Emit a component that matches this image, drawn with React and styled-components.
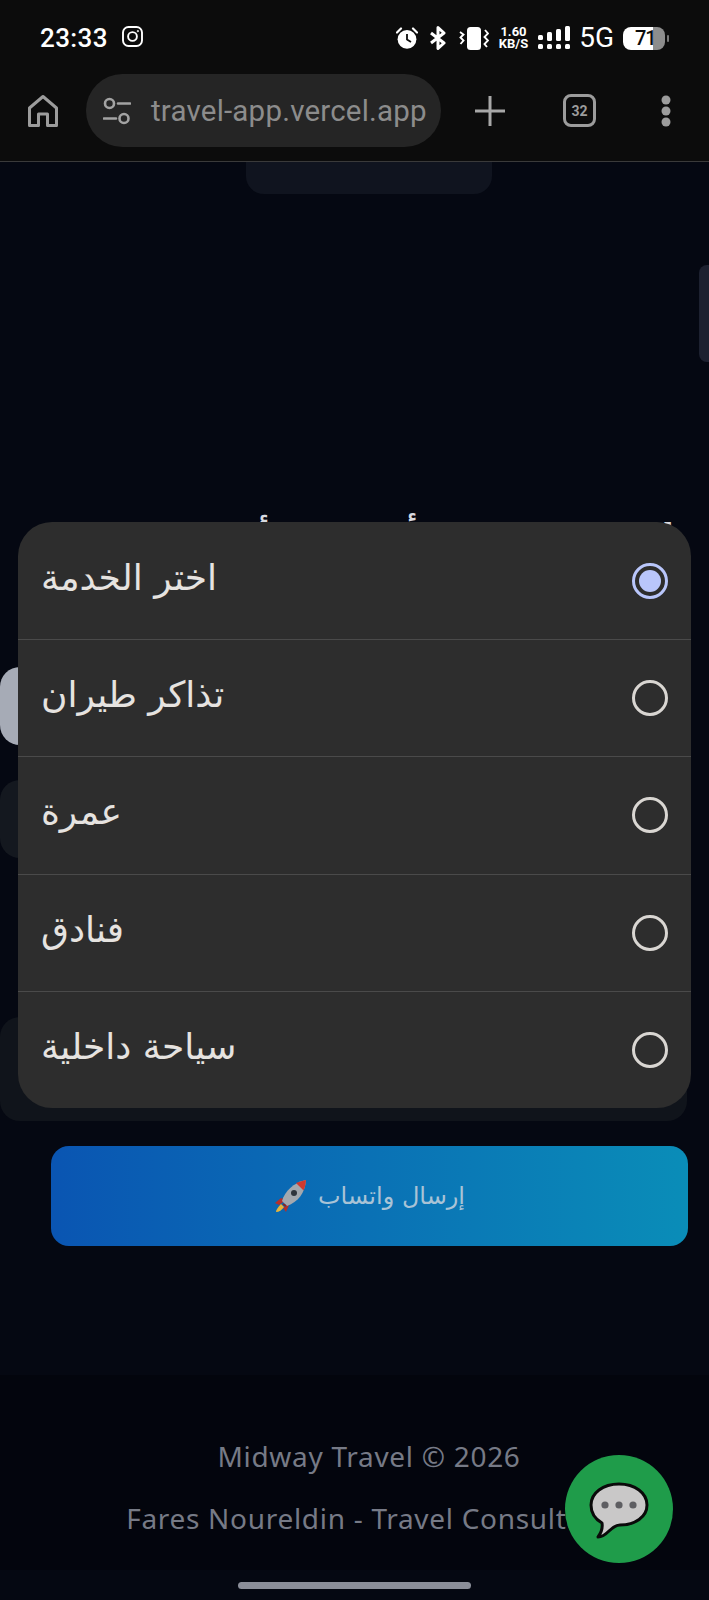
import styled, { createGlobalStyle } from "styled-components";

const options = ["اختر الخدمة", "تذاكر طيران", "عمرة", "فنادق", "سياحة داخلية"];

const GlobalStyle = createGlobalStyle`
  html, body {
    margin: 0;
    padding: 0;
    background: #050812;
  }
  * {
    box-sizing: border-box;
  }
`;

const HomeIcon = () => (
  <svg width="32" height="34" viewBox="0 0 32 34" fill="none" stroke="#9c9c9c" strokeWidth="3">
    <path d="M2.5 31.5V14L16 2.5L29.5 14V31.5H20.5V20H11.5V31.5Z" strokeLinejoin="round" />
  </svg>
);

const TuneIcon = () => (
  <svg width="28" height="28" viewBox="0 0 28 28" fill="none" stroke="#a3a3a3" strokeWidth="2.6">
    <circle cx="6.5" cy="6.5" r="4.5" />
    <path d="M15 6.5H27M1 21.5H13" strokeLinecap="round" />
    <circle cx="21" cy="21.5" r="4.5" />
  </svg>
);

const PlusIcon = () => (
  <svg width="30" height="30" viewBox="0 0 30 30" stroke="#a8a8a8" strokeWidth="3">
    <path d="M15 0V30M0 15H30" />
  </svg>
);

const MoreIcon = () => (
  <svg width="10" height="32" viewBox="0 0 10 32" fill="#9c9c9c">
    <circle cx="5" cy="5" r="4.5" />
    <circle cx="5" cy="16" r="4.5" />
    <circle cx="5" cy="27" r="4.5" />
  </svg>
);

const InstagramIcon = () => (
  <svg width="21" height="21" viewBox="0 0 21 21" fill="none" stroke="#fff" strokeWidth="1.9">
    <rect x="1" y="1" width="19" height="19" rx="5.5" />
    <circle cx="10.5" cy="10.5" r="4.4" />
    <circle cx="15.9" cy="5.1" r="0.7" fill="#fff" strokeWidth="0.8" />
  </svg>
);

const AlarmIcon = () => (
  <svg width="22" height="22" viewBox="0 0 22 22">
    <circle cx="11" cy="12.3" r="9.4" fill="#fff" />
    <path d="M11 7V12.6L15 15" fill="none" stroke="#0c0c0c" strokeWidth="1.8" />
    <path d="M1 5.5L5 1.5M21 5.5L17 1.5" stroke="#fff" strokeWidth="2.2" strokeLinecap="round" />
  </svg>
);

const BluetoothIcon = () => (
  <svg width="18" height="24" viewBox="0 0 18 24" fill="none" stroke="#fff" strokeWidth="3">
    <path d="M2 7L15 17L9 22.5V1.5L15 7L2 17" strokeLinejoin="round" />
  </svg>
);

const VibrateIcon = () => (
  <svg width="30" height="23" viewBox="0 0 30 23" fill="none" stroke="#fff" strokeWidth="1.9">
    <rect x="8" y="0" width="14" height="23" rx="3.5" fill="#fff" stroke="none" />
    <path d="M1 5L4.5 7.5L1.5 10.5L4.5 13.5L1.5 17" />
    <path d="M26 3L29 6.5L25.5 10L29 13.5L25.5 17L28 20" />
  </svg>
);

const SignalIcon = () => (
  <svg width="32" height="24" viewBox="0 0 32 24" fill="#fff">
    <rect x="0" y="9" width="5" height="5" rx="1.5" />
    <rect x="0" y="18" width="5" height="5" rx="1.5" />
    <rect x="9" y="6" width="5" height="9" rx="1.5" />
    <rect x="9" y="18" width="5" height="5" rx="1.5" />
    <rect x="18" y="3" width="5" height="12" rx="1.5" />
    <rect x="18" y="18" width="5" height="5" rx="1.5" />
    <rect x="27" y="0" width="5" height="15" rx="1.5" />
    <rect x="27" y="18" width="5" height="5" rx="1.5" />
  </svg>
);

const RocketIcon = () => (
  <svg width="34" height="36" viewBox="0 0 34 36">
    <path d="M7 20L1 25L5 27L12 22Z" fill="#b52f2b" />
    <path d="M15 27L12 34L9 30L19 23Z" fill="#b52f2b" />
    <path d="M7 26C4 29 2 32 2 34C5 34 8 32 10 29Z" fill="#e8b53a" />
    <path d="M8 23C11 13 19 5 32 2C31 15 24 24 13 28Z" fill="#a4a8ae" />
    <path d="M22 5C26 3.5 29 2.6 32 2C31.8 5.5 31 9 29.6 12.5Z" fill="#cf3a30" />
    <circle cx="20" cy="15" r="3" fill="#30353c" />
    <path d="M9 26L12 28" stroke="#8c2622" strokeWidth="2" />
  </svg>
);

const BubbleIcon = () => (
  <svg width="60" height="58" viewBox="0 0 60 58">
    <path
      d="M30 2C46 2 58 11 58 23C58 35 46 43 31 43C27 43 24 45 20 49C17 52 13 55 9 55C12 51 14 47 13 41C6 37 2 30 2 23C2 11 14 2 30 2Z"
      fill="#c9c8c8"
      stroke="#0a0a0a"
      strokeWidth="3"
      strokeLinejoin="round"
    />
    <circle cx="16" cy="23" r="3.6" fill="#5e5e62" />
    <circle cx="30" cy="23" r="3.6" fill="#5e5e62" />
    <circle cx="44" cy="23" r="3.6" fill="#5e5e62" />
  </svg>
);

const App = () => {
  return (
    <>
      <GlobalStyle />
      <StyledScreen>
        <StyledBrowserChrome>
          <StyledStatusBar>
            <StyledTime>23:33</StyledTime>
            <InstagramIcon />
            <StyledStatusIcons>
              <AlarmIcon />
              <BluetoothIcon />
              <VibrateIcon />
              <StyledSpeed>
                <span>1.60</span>
                <span>KB/S</span>
              </StyledSpeed>
              <SignalIcon />
              <StyledNetwork>5G</StyledNetwork>
              <StyledBattery>
                <StyledBatteryLevel>71</StyledBatteryLevel>
              </StyledBattery>
            </StyledStatusIcons>
          </StyledStatusBar>
          <StyledToolbar>
            <HomeIcon />
            <StyledAddressBar>
              <TuneIcon />
              <StyledUrl>travel-app.vercel.app</StyledUrl>
            </StyledAddressBar>
            <StyledPlusSlot>
              <PlusIcon />
            </StyledPlusSlot>
            <StyledTabCount>32</StyledTabCount>
            <MoreIcon />
          </StyledToolbar>
        </StyledBrowserChrome>

        <StyledPage>
          <StyledNavTab />
          <StyledHeading>اطلب رحلتك بأفضل الأسعار</StyledHeading>
          <StyledForm>
            <StyledField $tone="#a6abb6" />
            <StyledField $tone="#14181f" />
            <StyledTextArea />
            <StyledSendButton>
              <RocketIcon />
              <span>إرسال واتساب</span>
            </StyledSendButton>
          </StyledForm>
          <StyledFooter>
            <StyledFooterText>Midway Travel © 2026</StyledFooterText>
            <StyledFooterText>Fares Noureldin - Travel Consultant</StyledFooterText>
          </StyledFooter>
          <StyledGestureArea>
            <StyledGestureBar />
          </StyledGestureArea>
        </StyledPage>

        <StyledScrollThumb />

        <StyledSheet>
          {options.map((option, index) => (
            <StyledOption key={option}>
              <StyledOptionLabel>{option}</StyledOptionLabel>
              <StyledRadio $checked={index === 0} />
            </StyledOption>
          ))}
        </StyledSheet>

        <StyledChatButton>
          <BubbleIcon />
        </StyledChatButton>
      </StyledScreen>
    </>
  );
};

const StyledScreen = styled.div`
  position: relative;
  width: 709px;
  height: 1600px;
  overflow: hidden;
  display: flex;
  flex-direction: column;
  background: #050812;
  font-family: Roboto, "Noto Sans", sans-serif;
`;

const StyledBrowserChrome = styled.header`
  height: 162px;
  flex-shrink: 0;
  background: #0c0c0c;
  border-bottom: 1px solid #3a3a3a;
`;

const StyledStatusBar = styled.div`
  height: 74px;
  padding: 26px 44px 0 40px;
  display: flex;
  align-items: flex-start;
  gap: 14px;
  color: #fff;
`;

const StyledTime = styled.span`
  font-size: 26px;
  line-height: 24px;
  font-weight: 500;
  letter-spacing: 0.4px;
`;

const StyledStatusIcons = styled.div`
  margin-left: auto;
  display: flex;
  align-items: center;
  gap: 10px;
  > svg:first-child {
    margin-right: 1px;
  }
  > svg:nth-child(3) {
    margin-left: 2px;
  }
`;

const StyledSpeed = styled.div`
  display: flex;
  flex-direction: column;
  align-items: center;
  font-size: 13px;
  line-height: 12px;
  font-weight: 700;
`;

const StyledNetwork = styled.span`
  font-size: 28px;
  line-height: 24px;
  margin-left: -1px;
  margin-right: -1px;
`;

const StyledBattery = styled.div`
  position: relative;
  width: 42px;
  height: 23px;
  border-radius: 8px;
  background: linear-gradient(90deg, #fff 0 72%, #8d8d8d 72% 100%);
  &::after {
    content: "";
    position: absolute;
    right: -4px;
    top: 8px;
    width: 2px;
    height: 7px;
    border-radius: 1px;
    background: #777;
  }
`;

const StyledBatteryLevel = styled.span`
  display: block;
  padding-left: 12px;
  color: #0c0c0c;
  font-size: 20px;
  line-height: 23px;
  font-weight: 500;
  letter-spacing: -1px;
`;

const StyledToolbar = styled.div`
  height: 73px;
  padding: 0 0 0 27px;
  display: flex;
  align-items: center;
`;

const StyledAddressBar = styled.div`
  width: 355px;
  height: 73px;
  margin-left: 27px;
  padding-left: 17px;
  display: flex;
  align-items: center;
  gap: 20px;
  border-radius: 37px;
  background: #252525;
`;

const StyledUrl = styled.span`
  color: #8c8c8c;
  font-size: 29.5px;
  letter-spacing: 0.2px;
  white-space: nowrap;
`;

const StyledPlusSlot = styled.div`
  display: flex;
  margin-left: 34px;
`;

const StyledTabCount = styled.div`
  width: 33px;
  height: 33px;
  margin-left: 58px;
  margin-right: 65px;
  display: flex;
  align-items: center;
  justify-content: center;
  border: 3px solid #9c9c9c;
  border-radius: 8px;
  color: #9c9c9c;
  font-size: 14px;
  font-weight: 700;
`;

const StyledPage = styled.main`
  flex: 1;
  display: flex;
  flex-direction: column;
  min-height: 0;
`;

const StyledNavTab = styled.div`
  width: 246px;
  height: 32px;
  margin-left: 246px;
  flex-shrink: 0;
  border-radius: 0 0 18px 18px;
  background: #10141f;
`;

const StyledHeading = styled.h1`
  width: 709px;
  height: 50px;
  margin: 319px 0 0;
  padding: 0 35px;
  color: #d8dae0;
  font-family: "DejaVu Sans", sans-serif;
  font-size: 37px;
  line-height: 50px;
  font-weight: 700;
  white-space: nowrap;
  direction: rtl;
`;

const StyledForm = styled.div`
  margin-top: 104px;
  display: flex;
  flex-direction: column;
`;

const StyledField = styled.div`
  width: 687px;
  height: 78px;
  margin-bottom: 35px;
  border-radius: 20px;
  background: ${(props) => props.$tone};
`;

const StyledTextArea = styled.div`
  width: 687px;
  height: 104px;
  margin-top: 124px;
  border-radius: 20px;
  background: #10141b;
`;

const StyledSendButton = styled.div`
  width: 637px;
  height: 100px;
  margin: 25px 0 0 51px;
  display: flex;
  align-items: center;
  justify-content: center;
  gap: 10px;
  border-radius: 18px;
  background: linear-gradient(90deg, #0a55b2, #0a8db8);
  color: #a9c3d6;
  font-family: "DejaVu Sans", sans-serif;
  font-size: 24px;
`;

const StyledFooter = styled.footer`
  width: 738px;
  height: 195px;
  margin-top: 129px;
  padding-top: 62px;
  flex-shrink: 0;
  display: flex;
  flex-direction: column;
  align-items: center;
  gap: 24px;
  background: #03050d;
`;

const StyledFooterText = styled.p`
  margin: 0;
  color: #767a86;
  font-family: "Noto Sans", sans-serif;
  font-size: 28px;
  line-height: 38px;
  letter-spacing: 0.7px;
  white-space: nowrap;
`;

const StyledGestureArea = styled.div`
  flex: 1;
  padding: 12px 0 0 238px;
`;

const StyledGestureBar = styled.div`
  width: 233px;
  height: 7px;
  border-radius: 4px;
  background: #8b8e99;
`;

const StyledScrollThumb = styled.div`
  position: absolute;
  top: 265px;
  right: -10px;
  width: 20px;
  height: 97px;
  border-radius: 8px;
  background: #1d2130;
`;

const StyledSheet = styled.div`
  position: absolute;
  top: 522px;
  left: 18px;
  width: 673px;
  border-radius: 34px;
  background: #2d2d2d;
`;

const StyledOption = styled.div`
  height: 117.2px;
  padding: 0 23px 0 23px;
  display: flex;
  align-items: center;
  justify-content: space-between;
  &:not(:first-child) {
    border-top: 1px solid #4a4a4a;
  }
`;

const StyledOptionLabel = styled.span`
  color: #e6e3e0;
  font-family: "DejaVu Sans", sans-serif;
  font-size: 36px;
  line-height: 44px;
  margin-top: -6px;
`;

const StyledRadio = styled.span`
  position: relative;
  width: 36px;
  height: 36px;
  border-radius: 50%;
  border: 3px solid ${(props) => (props.$checked ? "#b9c6fb" : "#d9d6d2")};
  &::after {
    content: "";
    display: ${(props) => (props.$checked ? "block" : "none")};
    position: absolute;
    inset: 4px;
    border-radius: 50%;
    background: #b9c6fb;
  }
`;

const StyledChatButton = styled.div`
  position: absolute;
  left: 565px;
  top: 1455px;
  width: 108px;
  height: 108px;
  padding-top: 3px;
  display: flex;
  align-items: center;
  justify-content: center;
  border-radius: 50%;
  background: #1f9c4a;
`;

export default App;
